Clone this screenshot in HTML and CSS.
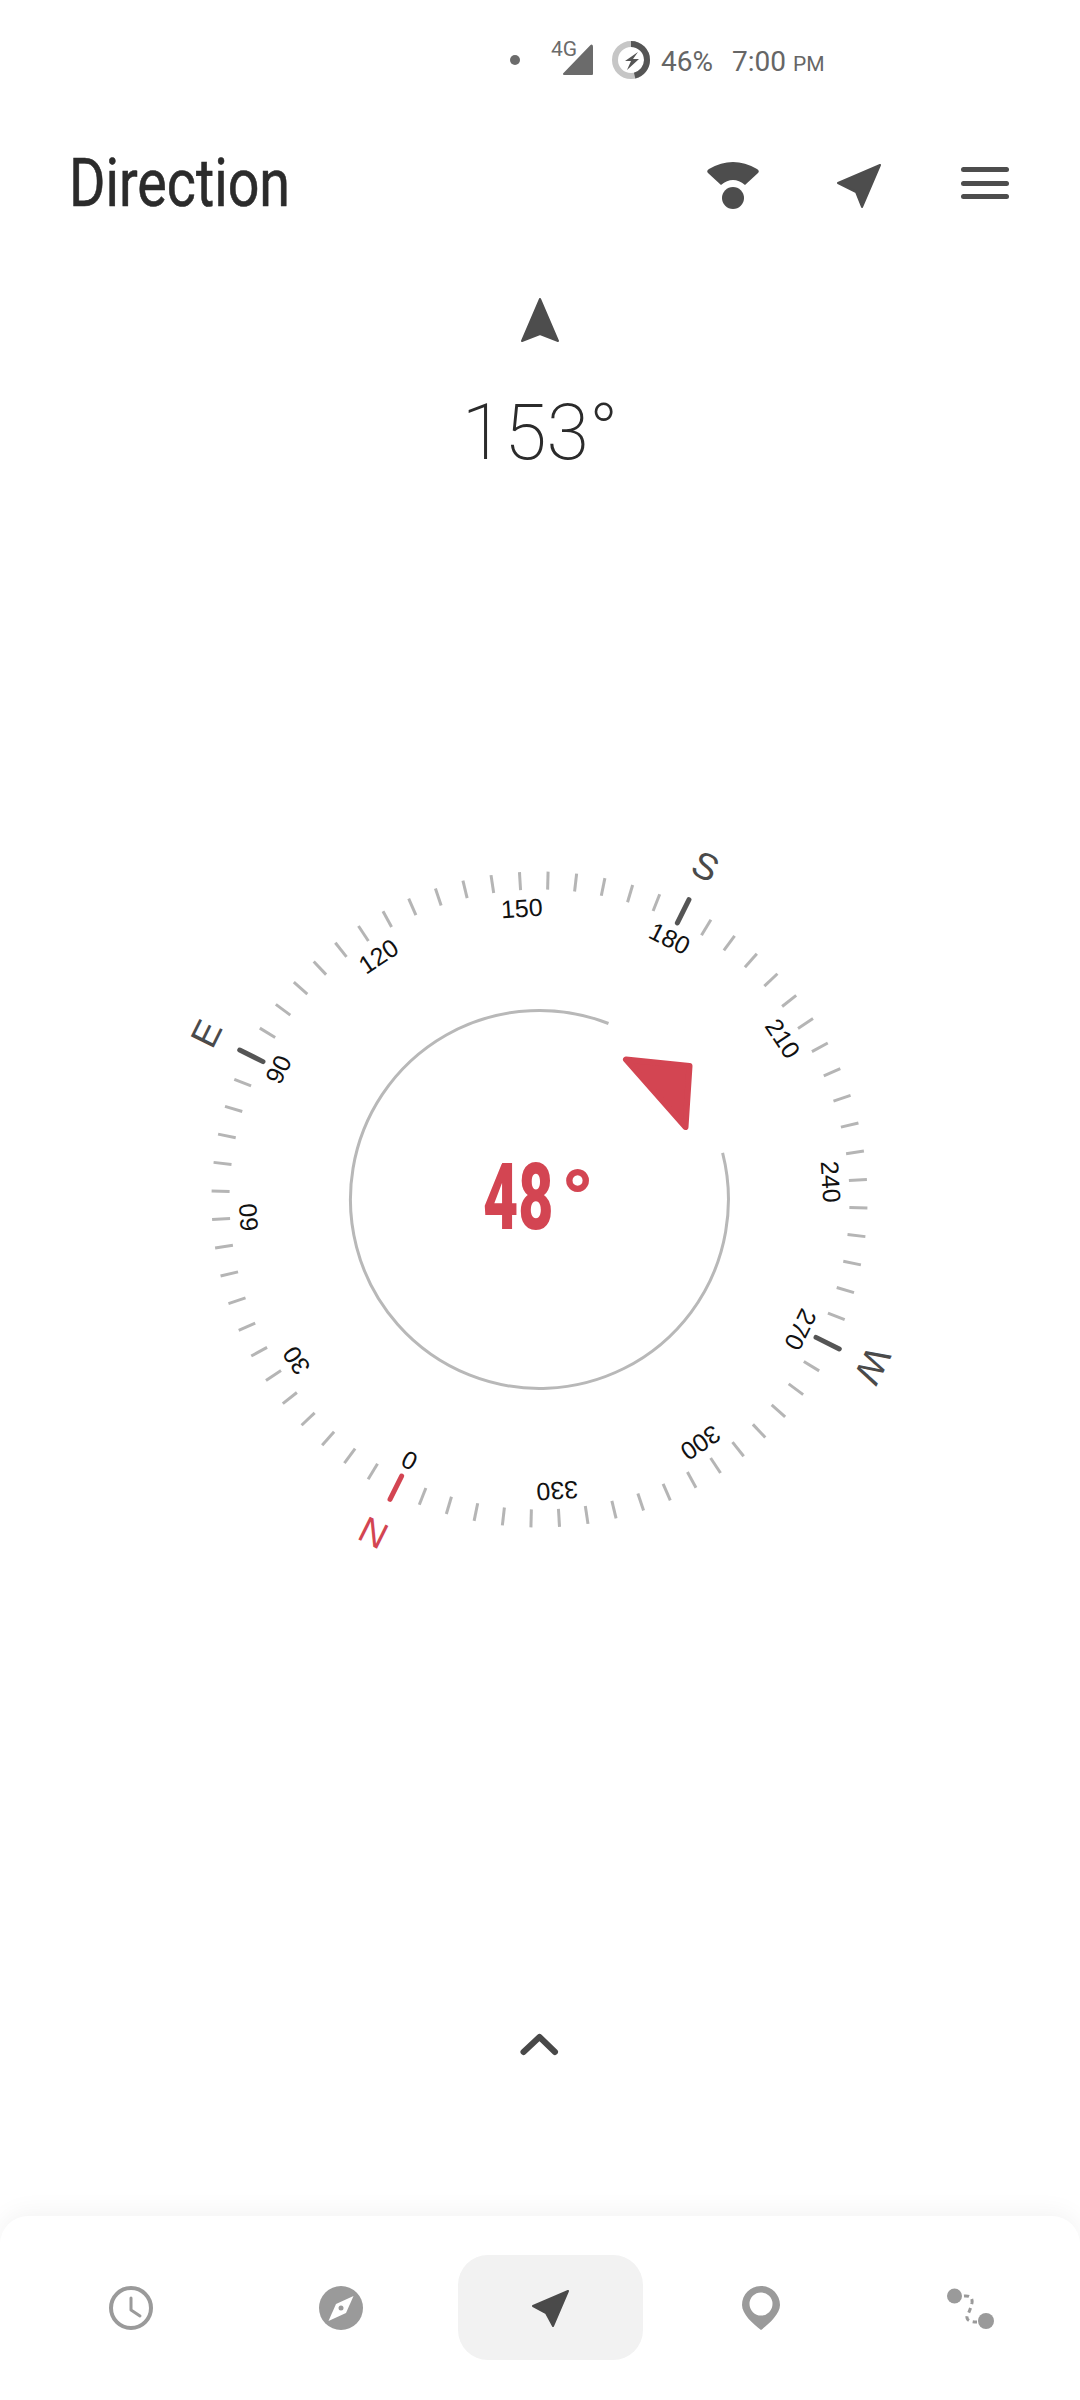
FILE: index.html
```html
<!DOCTYPE html>
<html lang="en">
<head>
    <meta charset="UTF-8" />
    <meta name="viewport" content="width=device-width, initial-scale=1.0"/>
    <title>Direction</title>
    <link rel="stylesheet" href="styles.css">
</head>
<body>

<div class="status">
    <span class="status-dot"></span>
    <svg class="status-signal" width="45" height="38" viewBox="0 0 45 38">
        <text x="1" y="15" class="status-4g">4G</text>
        <path d="M14 33 L41 5 Q42 4 42 6 V33 Z" fill="#6b6b6b" stroke="#6b6b6b" stroke-width="2" stroke-linejoin="round"/>
    </svg>
    <svg class="status-battery" width="40" height="40" viewBox="0 0 40 40">
        <circle cx="20" cy="20" r="16" fill="none" stroke="#c6c6c6" stroke-width="6"/>
        <circle cx="20" cy="20" r="16" fill="none" stroke="#555" stroke-width="6" stroke-dasharray="46.2 100.5" transform="rotate(-90 20 20)"/>
        <path d="M27 12 L14 21 H20 L16 30 L28 19 H22 Z" fill="#555"/>
    </svg>
    <span class="status-pct">46%</span>
    <span class="status-time">7:00 <small>PM</small></span>
</div>

<header class="top">
    <h1>Direction</h1>
    <div class="top-icons">
        <svg width="60" height="60" viewBox="0 0 60 60" fill="#4d4d4d">
            <path d="M5 20 Q3 18 6 16 Q30 2 54 16 Q57 18 55 20 L42 32 Q30 22 18 32 Z"/>
            <circle cx="30" cy="45" r="11"/>
        </svg>
        <svg width="60" height="60" viewBox="0 0 60 60" fill="#4d4d4d" stroke="#4d4d4d" stroke-width="2" stroke-linejoin="round">
            <path d="M51 12 L9 30 L27 39 L33 54 Z"/>
        </svg>
        <div class="burger"><span></span><span></span><span></span></div>
    </div>
</header>

<div class="heading">
    <svg width="40" height="46" viewBox="0 0 40 46" fill="#4d4d4d" stroke="#4d4d4d" stroke-width="2" stroke-linejoin="round">
        <path d="M20 2 L2 44 L20 37 L38 44 Z"/>
    </svg>
    <div class="heading-value">153°</div>
</div>

<svg class="compass" id="compass" width="1080" height="700" viewBox="0 0 1080 700">
    <path class="ring" d="M722.6 302.8 A189 189 0 1 1 608.5 173.5"/>
    <path class="pointer" d="M626 209.5 L689.5 216 L685.5 277 Z"/>
    <text class="bearing" transform="translate(483 379) scale(.66 1)">48</text>
    <text class="bearing-deg" x="561" y="379">°</text>
</svg>

<svg class="chevron" width="44" height="28" viewBox="0 0 44 28">
    <path d="M6.500 20 L22.500 5 L38 20" fill="none" stroke="#484848" stroke-width="6" stroke-linecap="round" stroke-linejoin="round"/>
</svg>

<nav class="tabs">
    <div class="tab">
        <svg width="60" height="60" viewBox="0 0 60 60" fill="none" stroke="#9a9a9a">
            <circle cx="30" cy="30" r="20" stroke-width="4"/>
            <path d="M30 20 V32 L39 38" stroke-width="3" stroke-linecap="round" stroke-linejoin="round"/>
        </svg>
    </div>
    <div class="tab">
        <svg width="60" height="60" viewBox="0 0 60 60">
            <circle cx="30" cy="30" r="22" fill="#9a9a9a"/>
            <path d="M42.5 18 L25 26 L17.5 43 L35 35 Z" fill="#fff"/>
            <circle cx="30" cy="30" r="2.5" fill="#9a9a9a"/>
        </svg>
    </div>
    <div class="tab tab-active">
        <svg width="60" height="60" viewBox="0 0 60 60" fill="#4a4a4a" stroke="#4a4a4a" stroke-width="2" stroke-linejoin="round">
            <path d="M47 13 L12 28 L25 35 L32 48 Z"/>
        </svg>
    </div>
    <div class="tab">
        <svg width="60" height="60" viewBox="0 0 60 60">
            <path fill-rule="evenodd" fill="#9a9a9a" d="M30 8 C40.5 8 49 16.5 49 27 C49 36 38 46 30 52 C22 46 11 36 11 27 C11 16.5 19.500 8 30 8 Z M30 14.500 A11.500 11.500 0 1 0 30 37.500 A11.500 11.500 0 1 0 30 14.500 Z"/>
        </svg>
    </div>
    <div class="tab">
        <svg width="60" height="60" viewBox="0 0 60 60">
            <circle cx="13.500" cy="18" r="7.500" fill="#9a9a9a"/>
            <circle cx="45" cy="43" r="8" fill="#9a9a9a"/>
            <path d="M23 18 Q32 17 31 25 Q29 33 26 38 Q25 44 36 44" fill="none" stroke="#9a9a9a" stroke-width="3" stroke-dasharray="5 4"/>
        </svg>
    </div>
</nav>

<script src="compass.js"></script>

</body>
</html>
```

FILE: styles.css
```css
body {
    margin: 0;
    height: 2400px;
    overflow: hidden;
    display: flex;
    flex-direction: column;
    background: #fff;
    font-family: Roboto, "Liberation Sans", sans-serif;
}

.status {
    display: flex;
    align-items: center;
    height: 40px;
    padding: 40px 0 0 510px;
    color: #666;
    font-size: 28px;
}
.status-dot {
    width: 10px;
    height: 10px;
    border-radius: 50%;
    background: #6b6b6b;
    margin-right: 30px;
}
.status-signal {
    overflow: visible;
}
.status-4g {
    font-size: 21px;
    fill: #6b6b6b;
}
.status-battery {
    margin-left: 16px;
}
.status-pct {
    margin: 3px 0 0 10px;
}
.status-time {
    margin: 3px 0 0 19px;
}
.status-time small {
    font-size: 21px;
}

.top {
    display: flex;
    justify-content: space-between;
    align-items: center;
    height: 60px;
    margin-top: 73px;
    padding: 0 65px 0 69px;
}
.top h1 {
    margin: 0;
    font-size: 67px;
    font-weight: 400;
    color: #2b2b2b;
    transform: scaleX(.83);
    transform-origin: left center;
    -webkit-text-stroke: .6px #2b2b2b;
}
.top-icons {
    display: flex;
    align-items: center;
    gap: 66px;
}
.burger {
    display: flex;
    flex-direction: column;
    gap: 8.500px;
    width: 48px;
    padding: 0 6px;
}
.burger span {
    height: 5px;
    border-radius: 3px;
    background: #4d4d4d;
}

.heading {
    display: flex;
    flex-direction: column;
    align-items: center;
    margin-top: 84px;
}
.heading-value {
    margin-top: 52px;
    font-size: 77px;
    font-weight: 200;
    line-height: 1;
    color: #2b2b2b;
}

.compass {
    display: block;
    margin-top: 378px;
    flex: none;
    overflow: visible;
}
.ring {
    fill: none;
    stroke: #b8b8b8;
    stroke-width: 3;
}
.pointer {
    fill: #d34552;
    stroke: #d34552;
    stroke-width: 6;
    stroke-linejoin: round;
}
.bearing {
    font-size: 92px;
    font-weight: 900;
    fill: #d34552;
}
.bearing-deg {
    font-size: 84px;
    font-weight: 900;
    fill: #d34552;
}
.tick {
    stroke: #b5b5b5;
    stroke-width: 3;
}
.tick-major {
    stroke: #555;
    stroke-width: 5;
    stroke-linecap: round;
}
.tick-north {
    stroke: #d34552;
}
.deg {
    font-family: "Liberation Sans", sans-serif;
    font-size: 25px;
    fill: #111;
    text-anchor: middle;
    dominant-baseline: central;
}
.cardinal {
    font-family: "Liberation Sans", sans-serif;
    font-size: 37px;
    fill: #4a4a4a;
    text-anchor: middle;
    dominant-baseline: central;
}
.cardinal-north {
    fill: #d34552;
}

.chevron {
    display: block;
    flex: none;
    margin: 482px 0 0 517px;
}

.tabs {
    margin-top: auto;
    height: 145px;
    padding: 39px 0 0 38px;
    display: grid;
    grid-template-columns: repeat(5, 185px);
    grid-auto-rows: 105px;
    gap: 25px;
    background: #fff;
    border-radius: 28px 28px 0 0;
    box-shadow: 0 -4px 24px rgba(0, 0, 0, .05);
}
.tab {
    display: flex;
    align-items: center;
    justify-content: center;
    border-radius: 30px;
}
.tab-active {
    background: #f2f2f2;
}
```

FILE: compass.js
```js
// Zifferblatt: alle 5 Grad ein Strich, 0 Grad liegt bei 206.5 Grad (Uhrzeigersinn von oben)
const NS = 'http://www.w3.org/2000/svg';
const svg = document.getElementById('compass');
const cx = 539.5;
const cy = 349.5;
const offset = 206.5;
const letters = { 0: 'N', 90: 'E', 180: 'S', 270: 'W' };

function add(tag, attrs, text) {
    const el = document.createElementNS(NS, tag);
    for (const k in attrs) el.setAttribute(k, attrs[k]);
    if (text !== undefined) el.textContent = text;
    svg.appendChild(el);
}

for (let d = 0; d < 360; d += 5) {
    const rot = 'rotate(' + (d + offset) + ' ' + cx + ' ' + cy + ')';
    const major = d % 90 === 0;

    let cls = 'tick';
    if (major) cls += ' tick-major';
    if (d === 0) cls += ' tick-north';
    add('line', {
        x1: cx, x2: cx,
        y1: cy - (major ? 335 : 328),
        y2: cy - (major ? 309 : 310),
        class: cls,
        transform: rot
    });

    if (d % 30 === 0) {
        add('text', { x: cx, y: cy - 292, class: 'deg', transform: rot }, d);
    }
    if (major) {
        add('text', {
            x: cx, y: cy - 372,
            class: d === 0 ? 'cardinal cardinal-north' : 'cardinal',
            transform: rot
        }, letters[d]);
    }
}
```
